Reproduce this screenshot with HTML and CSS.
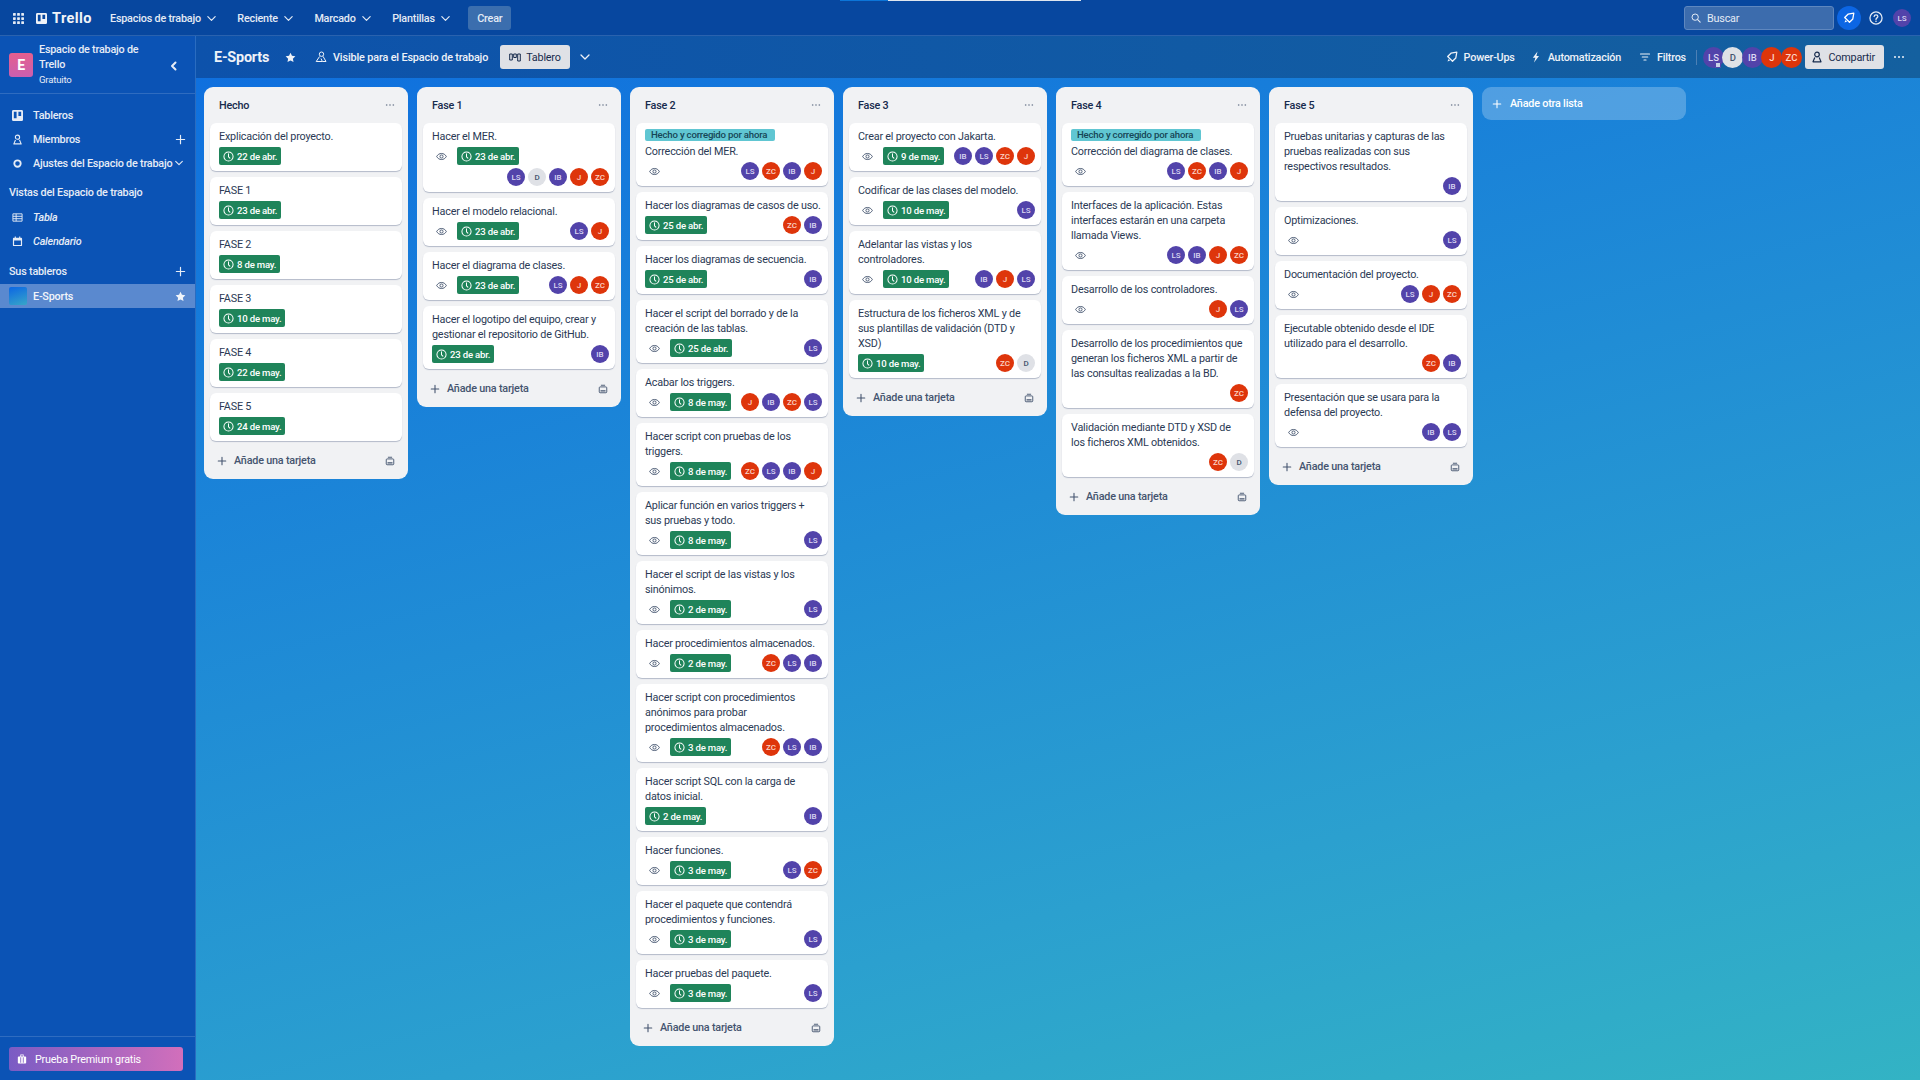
FILE: index.html
```html
<!DOCTYPE html>
<html lang="es">
<head>
    <meta charset="UTF-8">
    <title>E-Sports | Trello</title>
    <link rel="stylesheet" href="styles.css">
</head>
<body>
    <svg class="icon-defs" xmlns="http://www.w3.org/2000/svg">
        <symbol id="i-apps" viewBox="0 0 12 12"><g fill="currentColor"><rect x="0" y="0" width="3" height="3" rx=".6"/><rect x="4.5" y="0" width="3" height="3" rx=".6"/><rect x="9" y="0" width="3" height="3" rx=".6"/><rect x="0" y="4.5" width="3" height="3" rx=".6"/><rect x="4.5" y="4.5" width="3" height="3" rx=".6"/><rect x="9" y="4.5" width="3" height="3" rx=".6"/><rect x="0" y="9" width="3" height="3" rx=".6"/><rect x="4.5" y="9" width="3" height="3" rx=".6"/><rect x="9" y="9" width="3" height="3" rx=".6"/></g></symbol>
        <symbol id="i-board" viewBox="0 0 12 12"><path fill="currentColor" fill-rule="evenodd" d="M1.5 0h9A1.5 1.5 0 0 1 12 1.5v9a1.5 1.5 0 0 1-1.500 1.500h-9A1.500 1.500 0 0 1 0 10.500v-9A1.500 1.500 0 0 1 1.500 0zM2 2v7h3V2zm5 0v4.500h3V2z"/></symbol>
        <symbol id="i-chev" viewBox="0 0 12 12"><path fill="none" stroke="currentColor" stroke-width="1.300" stroke-linecap="round" stroke-linejoin="round" d="M2 4l4 4 4-4"/></symbol>
        <symbol id="i-clock" viewBox="0 0 12 12"><circle cx="6" cy="6" r="5" fill="none" stroke="currentColor" stroke-width="1.100"/><path fill="none" stroke="currentColor" stroke-width="1.100" stroke-linecap="round" d="M6 3v3.300l1.500 1.500"/></symbol>
        <symbol id="i-eye" viewBox="0 0 12 12"><path fill="none" stroke="currentColor" stroke-width="1" d="M.7 6C2 3.800 3.800 2.700 6 2.700S10 3.800 11.300 6C10 8.200 8.200 9.300 6 9.300S2 8.200.7 6z"/><circle cx="6" cy="6" r="1.700" fill="none" stroke="currentColor" stroke-width="1"/></symbol>
        <symbol id="i-plus" viewBox="0 0 12 12"><path fill="none" stroke="currentColor" stroke-width="1.300" stroke-linecap="round" d="M6 1.500v9M1.500 6h9"/></symbol>
        <symbol id="i-dots" viewBox="0 0 12 4"><g fill="currentColor"><circle cx="2" cy="2" r="1"/><circle cx="6" cy="2" r="1"/><circle cx="10" cy="2" r="1"/></g></symbol>
        <symbol id="i-star" viewBox="0 0 12 12"><path fill="currentColor" d="M6 .8l1.600 3.400 3.700.5-2.700 2.600.7 3.700L6 9.200 2.700 11l.7-3.700L.7 4.700l3.700-.5z"/></symbol>
        <symbol id="i-template" viewBox="0 0 12 12"><path fill="none" stroke="currentColor" stroke-width="1.100" d="M3.500 1.500h5M2.500 3.500h7a1 1 0 0 1 1 1v5a1 1 0 0 1-1 1h-7a1 1 0 0 1-1-1v-5a1 1 0 0 1 1-1z"/><path fill="currentColor" d="M3 7.500h6v1.500H3z"/></symbol>
        <symbol id="i-search" viewBox="0 0 12 12"><circle cx="5" cy="5" r="3.800" fill="none" stroke="currentColor" stroke-width="1.200"/><path stroke="currentColor" stroke-width="1.300" stroke-linecap="round" d="M8 8l3 3"/></symbol>
        <symbol id="i-rocket" viewBox="0 0 12 12"><path fill="none" stroke="currentColor" stroke-width="1.300" stroke-linejoin="round" d="M10.800 1.200L9.800 7 6.500 10.300 1.700 5.500 5 2.200z"/><path fill="currentColor" d="M1.500 10.500l1-2.600 1.600 1.600z"/></symbol>
        <symbol id="i-help" viewBox="0 0 12 12"><circle cx="6" cy="6" r="5.200" fill="none" stroke="currentColor" stroke-width="1.100"/><path fill="none" stroke="currentColor" stroke-width="1.100" stroke-linecap="round" d="M4.400 4.700C4.500 3.800 5.200 3.300 6 3.300c.9 0 1.600.6 1.600 1.400 0 1.200-1.600 1.200-1.600 2.500"/><circle cx="6" cy="8.800" r=".7" fill="currentColor"/></symbol>
        <symbol id="i-person" viewBox="0 0 12 12"><circle cx="6" cy="3.500" r="2.300" fill="none" stroke="currentColor" stroke-width="1.200"/><path fill="none" stroke="currentColor" stroke-width="1.200" stroke-linejoin="round" d="M3.800 6.500L2 10.800h8L8.200 6.500"/></symbol>
        <symbol id="i-gear" viewBox="0 0 12 12"><circle cx="6" cy="6" r="3.500" fill="none" stroke="currentColor" stroke-width="2"/></symbol>
        <symbol id="i-table" viewBox="0 0 12 12"><path fill="none" stroke="currentColor" stroke-width="1" d="M1 2h10v8H1zM1 4.700h10M1 7.300h10M4.500 2v8"/></symbol>
        <symbol id="i-calendar" viewBox="0 0 12 12"><path fill="currentColor" fill-rule="evenodd" d="M3 .5h1.200V2h3.600V.5H9V2h1a1 1 0 0 1 1 1v7a1 1 0 0 1-1 1H2a1 1 0 0 1-1-1V3a1 1 0 0 1 1-1h1zM2.300 5v4.700h7.400V5z"/></symbol>
        <symbol id="i-back" viewBox="0 0 12 12"><path fill="none" stroke="currentColor" stroke-width="2" stroke-linecap="round" stroke-linejoin="round" d="M7.500 2.500L4 6l3.500 3.500"/></symbol>
        <symbol id="i-bolt" viewBox="0 0 12 12"><path fill="currentColor" d="M7.500.5L2.800 6.800h2.600L4 11.500l5-6.500H6.400z"/></symbol>
        <symbol id="i-filter" viewBox="0 0 12 12"><path fill="none" stroke="currentColor" stroke-width="1.200" stroke-linecap="round" d="M1.500 3h9M3.300 6h5.400M5 9h2"/></symbol>
        <symbol id="i-gift" viewBox="0 0 12 12"><path fill="currentColor" fill-rule="evenodd" d="M4 .5h4V3h2a1 1 0 0 1 1 1v6.500a1 1 0 0 1-1 1H2a1 1 0 0 1-1-1V4a1 1 0 0 1 1-1h2zM5 1.500V3h2V1.500zM4 4v6.500h1V4zm3 0v6.500h1V4z"/></symbol>
        <symbol id="i-boardview" viewBox="0 0 12 12"><path fill="none" stroke="currentColor" stroke-width="1" d="M.7 3h2.600v6H.7zM4.700 3h2.600v3.500H4.700zM8.700 3h2.600v7H8.700z"/></symbol>
        <symbol id="i-team" viewBox="0 0 12 12"><g fill="none" stroke="currentColor" stroke-width="1"><circle cx="6.500" cy="3.200" r="2.200"/><path d="M4.600 5.500L1.200 10.500h6.200L6 7.500M8 5.300l3 5.200H7.400"/></g></symbol>
    </svg>

    <div class="load-bar"><span class="load-bar-done"></span></div>

    <header class="top-nav">
        <svg class="ico apps-ico"><use href="#i-apps"/></svg>
        <div class="logo"><svg class="ico logo-ico"><use href="#i-board"/></svg><span>Trello</span></div>
        <nav class="top-menu">
            <a class="top-link">Espacios de trabajo <svg class="ico chev"><use href="#i-chev"/></svg></a>
            <a class="top-link">Reciente <svg class="ico chev"><use href="#i-chev"/></svg></a>
            <a class="top-link">Marcado <svg class="ico chev"><use href="#i-chev"/></svg></a>
            <a class="top-link">Plantillas <svg class="ico chev"><use href="#i-chev"/></svg></a>
            <button class="create-btn">Crear</button>
        </nav>
        <div class="top-right">
            <div class="search"><svg class="ico"><use href="#i-search"/></svg><span>Buscar</span></div>
            <span class="rocket"><svg class="ico"><use href="#i-rocket"/></svg></span>
            <svg class="ico help-ico"><use href="#i-help"/></svg>
            <span class="av purple">LS</span>
        </div>
    </header>

    <div class="app-body">
        <aside class="sidebar">
            <div class="ws-head">
                <span class="ws-tile">E</span>
                <div class="ws-info">
                    <div class="ws-name">Espacio de trabajo de Trello</div>
                    <div class="ws-plan">Gratuito</div>
                </div>
                <svg class="ico ws-back"><use href="#i-back"/></svg>
            </div>

            <div class="side-group">
                <a class="side-row"><svg class="ico"><use href="#i-board"/></svg><span>Tableros</span></a>
                <a class="side-row"><svg class="ico"><use href="#i-person"/></svg><span>Miembros</span><svg class="ico side-end"><use href="#i-plus"/></svg></a>
                <a class="side-row"><svg class="ico"><use href="#i-gear"/></svg><span>Ajustes del Espacio de trabajo</span><svg class="ico settings-chev"><use href="#i-chev"/></svg></a>
            </div>

            <h3 class="side-title">Vistas del Espacio de trabajo</h3>
            <a class="side-row"><svg class="ico"><use href="#i-table"/></svg><em>Tabla</em></a>
            <a class="side-row"><svg class="ico"><use href="#i-calendar"/></svg><em>Calendario</em></a>

            <h3 class="side-title boards-title">Sus tableros <svg class="ico side-end"><use href="#i-plus"/></svg></h3>
            <a class="side-row side-active"><span class="board-thumb"></span><span>E-Sports</span><svg class="ico side-end"><use href="#i-star"/></svg></a>

            <div class="side-foot">
                <button class="premium-btn"><svg class="ico"><use href="#i-gift"/></svg>Prueba Premium gratis</button>
            </div>
        </aside>

        <main class="board">
            <div class="board-head">
                <h1 class="board-name">E-Sports</h1>
                <svg class="ico head-star"><use href="#i-star"/></svg>
                <a class="head-link visible-link"><svg class="ico"><use href="#i-team"/></svg>Visible para el Espacio de trabajo</a>
                <button class="light-btn"><svg class="ico"><use href="#i-boardview"/></svg>Tablero</button>
                <svg class="ico head-chev"><use href="#i-chev"/></svg>
                <div class="head-right">
                    <a class="head-link"><svg class="ico"><use href="#i-rocket"/></svg>Power-Ups</a>
                    <a class="head-link auto-link"><svg class="ico"><use href="#i-bolt"/></svg>Automatización</a>
                    <a class="head-link"><svg class="ico"><use href="#i-filter"/></svg>Filtros</a>
                    <span class="head-sep"></span>
                    <div class="head-avatars">
                        <span class="av purple">LS<i class="admin-mark"></i></span><span class="av grey">D</span><span class="av purple">IB</span><span class="av red">J</span><span class="av red">ZC</span>
                    </div>
                    <button class="light-btn share-btn"><svg class="ico"><use href="#i-person"/></svg>Compartir</button>
                    <svg class="ico head-dots"><use href="#i-dots"/></svg>
                </div>
            </div>

            <div class="lists">
                <section class="list">
                    <div class="list-head"><h2>Hecho</h2><svg class="ico dots"><use href="#i-dots"/></svg></div>
                    <article class="card"><p>Explicación del proyecto.</p><div class="meta"><span class="due"><svg class="ico"><use href="#i-clock"/></svg>22 de abr.</span></div></article>
                    <article class="card"><p>FASE 1</p><div class="meta"><span class="due"><svg class="ico"><use href="#i-clock"/></svg>23 de abr.</span></div></article>
                    <article class="card"><p>FASE 2</p><div class="meta"><span class="due"><svg class="ico"><use href="#i-clock"/></svg>8 de may.</span></div></article>
                    <article class="card"><p>FASE 3</p><div class="meta"><span class="due"><svg class="ico"><use href="#i-clock"/></svg>10 de may.</span></div></article>
                    <article class="card"><p>FASE 4</p><div class="meta"><span class="due"><svg class="ico"><use href="#i-clock"/></svg>22 de may.</span></div></article>
                    <article class="card"><p>FASE 5</p><div class="meta"><span class="due"><svg class="ico"><use href="#i-clock"/></svg>24 de may.</span></div></article>
                    <div class="list-foot"><svg class="ico"><use href="#i-plus"/></svg><span>Añade una tarjeta</span><svg class="ico tpl"><use href="#i-template"/></svg></div>
                </section>

                <section class="list">
                    <div class="list-head"><h2>Fase 1</h2><svg class="ico dots"><use href="#i-dots"/></svg></div>
                    <article class="card"><p>Hacer el MER.</p><div class="meta"><svg class="ico eye"><use href="#i-eye"/></svg><span class="due"><svg class="ico"><use href="#i-clock"/></svg>23 de abr.</span><div class="people"><span class="av purple">LS</span><span class="av grey">D</span><span class="av purple">IB</span><span class="av red">J</span><span class="av red">ZC</span></div></div></article>
                    <article class="card"><p>Hacer el modelo relacional.</p><div class="meta"><svg class="ico eye"><use href="#i-eye"/></svg><span class="due"><svg class="ico"><use href="#i-clock"/></svg>23 de abr.</span><div class="people"><span class="av purple">LS</span><span class="av red">J</span></div></div></article>
                    <article class="card"><p>Hacer el diagrama de clases.</p><div class="meta"><svg class="ico eye"><use href="#i-eye"/></svg><span class="due"><svg class="ico"><use href="#i-clock"/></svg>23 de abr.</span><div class="people"><span class="av purple">LS</span><span class="av red">J</span><span class="av red">ZC</span></div></div></article>
                    <article class="card"><p>Hacer el logotipo del equipo, crear y gestionar el repositorio de GitHub.</p><div class="meta"><span class="due"><svg class="ico"><use href="#i-clock"/></svg>23 de abr.</span><div class="people"><span class="av purple">IB</span></div></div></article>
                    <div class="list-foot"><svg class="ico"><use href="#i-plus"/></svg><span>Añade una tarjeta</span><svg class="ico tpl"><use href="#i-template"/></svg></div>
                </section>

                <section class="list">
                    <div class="list-head"><h2>Fase 2</h2><svg class="ico dots"><use href="#i-dots"/></svg></div>
                    <article class="card"><span class="label">Hecho y corregido por ahora</span><p>Corrección del MER.</p><div class="meta"><svg class="ico eye"><use href="#i-eye"/></svg><div class="people"><span class="av purple">LS</span><span class="av red">ZC</span><span class="av purple">IB</span><span class="av red">J</span></div></div></article>
                    <article class="card"><p>Hacer los diagramas de casos de uso.</p><div class="meta"><span class="due"><svg class="ico"><use href="#i-clock"/></svg>25 de abr.</span><div class="people"><span class="av red">ZC</span><span class="av purple">IB</span></div></div></article>
                    <article class="card"><p>Hacer los diagramas de secuencia.</p><div class="meta"><span class="due"><svg class="ico"><use href="#i-clock"/></svg>25 de abr.</span><div class="people"><span class="av purple">IB</span></div></div></article>
                    <article class="card"><p>Hacer el script del borrado y de la creación de las tablas.</p><div class="meta"><svg class="ico eye"><use href="#i-eye"/></svg><span class="due"><svg class="ico"><use href="#i-clock"/></svg>25 de abr.</span><div class="people"><span class="av purple">LS</span></div></div></article>
                    <article class="card"><p>Acabar los triggers.</p><div class="meta"><svg class="ico eye"><use href="#i-eye"/></svg><span class="due"><svg class="ico"><use href="#i-clock"/></svg>8 de may.</span><div class="people"><span class="av red">J</span><span class="av purple">IB</span><span class="av red">ZC</span><span class="av purple">LS</span></div></div></article>
                    <article class="card"><p>Hacer script con pruebas de los triggers.</p><div class="meta"><svg class="ico eye"><use href="#i-eye"/></svg><span class="due"><svg class="ico"><use href="#i-clock"/></svg>8 de may.</span><div class="people"><span class="av red">ZC</span><span class="av purple">LS</span><span class="av purple">IB</span><span class="av red">J</span></div></div></article>
                    <article class="card"><p>Aplicar función en varios triggers + sus pruebas y todo.</p><div class="meta"><svg class="ico eye"><use href="#i-eye"/></svg><span class="due"><svg class="ico"><use href="#i-clock"/></svg>8 de may.</span><div class="people"><span class="av purple">LS</span></div></div></article>
                    <article class="card"><p>Hacer el script de las vistas y los sinónimos.</p><div class="meta"><svg class="ico eye"><use href="#i-eye"/></svg><span class="due"><svg class="ico"><use href="#i-clock"/></svg>2 de may.</span><div class="people"><span class="av purple">LS</span></div></div></article>
                    <article class="card"><p>Hacer procedimientos almacenados.</p><div class="meta"><svg class="ico eye"><use href="#i-eye"/></svg><span class="due"><svg class="ico"><use href="#i-clock"/></svg>2 de may.</span><div class="people"><span class="av red">ZC</span><span class="av purple">LS</span><span class="av purple">IB</span></div></div></article>
                    <article class="card"><p>Hacer script con procedimientos<br>anónimos para probar<br>procedimientos almacenados.</p><div class="meta"><svg class="ico eye"><use href="#i-eye"/></svg><span class="due"><svg class="ico"><use href="#i-clock"/></svg>3 de may.</span><div class="people"><span class="av red">ZC</span><span class="av purple">LS</span><span class="av purple">IB</span></div></div></article>
                    <article class="card"><p>Hacer script SQL con la carga de datos inicial.</p><div class="meta"><span class="due"><svg class="ico"><use href="#i-clock"/></svg>2 de may.</span><div class="people"><span class="av purple">IB</span></div></div></article>
                    <article class="card"><p>Hacer funciones.</p><div class="meta"><svg class="ico eye"><use href="#i-eye"/></svg><span class="due"><svg class="ico"><use href="#i-clock"/></svg>3 de may.</span><div class="people"><span class="av purple">LS</span><span class="av red">ZC</span></div></div></article>
                    <article class="card"><p>Hacer el paquete que contendrá procedimientos y funciones.</p><div class="meta"><svg class="ico eye"><use href="#i-eye"/></svg><span class="due"><svg class="ico"><use href="#i-clock"/></svg>3 de may.</span><div class="people"><span class="av purple">LS</span></div></div></article>
                    <article class="card"><p>Hacer pruebas del paquete.</p><div class="meta"><svg class="ico eye"><use href="#i-eye"/></svg><span class="due"><svg class="ico"><use href="#i-clock"/></svg>3 de may.</span><div class="people"><span class="av purple">LS</span></div></div></article>
                    <div class="list-foot"><svg class="ico"><use href="#i-plus"/></svg><span>Añade una tarjeta</span><svg class="ico tpl"><use href="#i-template"/></svg></div>
                </section>

                <section class="list">
                    <div class="list-head"><h2>Fase 3</h2><svg class="ico dots"><use href="#i-dots"/></svg></div>
                    <article class="card"><p>Crear el proyecto con Jakarta.</p><div class="meta"><svg class="ico eye"><use href="#i-eye"/></svg><span class="due"><svg class="ico"><use href="#i-clock"/></svg>9 de may.</span><div class="people"><span class="av purple">IB</span><span class="av purple">LS</span><span class="av red">ZC</span><span class="av red">J</span></div></div></article>
                    <article class="card"><p>Codificar de las clases del modelo.</p><div class="meta"><svg class="ico eye"><use href="#i-eye"/></svg><span class="due"><svg class="ico"><use href="#i-clock"/></svg>10 de may.</span><div class="people"><span class="av purple">LS</span></div></div></article>
                    <article class="card"><p>Adelantar las vistas y los controladores.</p><div class="meta"><svg class="ico eye"><use href="#i-eye"/></svg><span class="due"><svg class="ico"><use href="#i-clock"/></svg>10 de may.</span><div class="people"><span class="av purple">IB</span><span class="av red">J</span><span class="av purple">LS</span></div></div></article>
                    <article class="card"><p>Estructura de los ficheros XML y de sus plantillas de validación (DTD y XSD)</p><div class="meta"><span class="due"><svg class="ico"><use href="#i-clock"/></svg>10 de may.</span><div class="people"><span class="av red">ZC</span><span class="av grey">D</span></div></div></article>
                    <div class="list-foot"><svg class="ico"><use href="#i-plus"/></svg><span>Añade una tarjeta</span><svg class="ico tpl"><use href="#i-template"/></svg></div>
                </section>

                <section class="list">
                    <div class="list-head"><h2>Fase 4</h2><svg class="ico dots"><use href="#i-dots"/></svg></div>
                    <article class="card"><span class="label">Hecho y corregido por ahora</span><p>Corrección del diagrama de clases.</p><div class="meta"><svg class="ico eye"><use href="#i-eye"/></svg><div class="people"><span class="av purple">LS</span><span class="av red">ZC</span><span class="av purple">IB</span><span class="av red">J</span></div></div></article>
                    <article class="card"><p>Interfaces de la aplicación. Estas interfaces estarán en una carpeta llamada Views.</p><div class="meta"><svg class="ico eye"><use href="#i-eye"/></svg><div class="people"><span class="av purple">LS</span><span class="av purple">IB</span><span class="av red">J</span><span class="av red">ZC</span></div></div></article>
                    <article class="card"><p>Desarrollo de los controladores.</p><div class="meta"><svg class="ico eye"><use href="#i-eye"/></svg><div class="people"><span class="av red">J</span><span class="av purple">LS</span></div></div></article>
                    <article class="card"><p>Desarrollo de los procedimientos que generan los ficheros XML a partir de las consultas realizadas a la BD.</p><div class="meta"><div class="people"><span class="av red">ZC</span></div></div></article>
                    <article class="card"><p>Validación mediante DTD y XSD de<br>los ficheros XML obtenidos.</p><div class="meta"><div class="people"><span class="av red">ZC</span><span class="av grey">D</span></div></div></article>
                    <div class="list-foot"><svg class="ico"><use href="#i-plus"/></svg><span>Añade una tarjeta</span><svg class="ico tpl"><use href="#i-template"/></svg></div>
                </section>

                <section class="list">
                    <div class="list-head"><h2>Fase 5</h2><svg class="ico dots"><use href="#i-dots"/></svg></div>
                    <article class="card"><p>Pruebas unitarias y capturas de las pruebas realizadas con sus respectivos resultados.</p><div class="meta"><div class="people"><span class="av purple">IB</span></div></div></article>
                    <article class="card"><p>Optimizaciones.</p><div class="meta"><svg class="ico eye"><use href="#i-eye"/></svg><div class="people"><span class="av purple">LS</span></div></div></article>
                    <article class="card"><p>Documentación del proyecto.</p><div class="meta"><svg class="ico eye"><use href="#i-eye"/></svg><div class="people"><span class="av purple">LS</span><span class="av red">J</span><span class="av red">ZC</span></div></div></article>
                    <article class="card"><p>Ejecutable obtenido desde el IDE utilizado para el desarrollo.</p><div class="meta"><div class="people"><span class="av red">ZC</span><span class="av purple">IB</span></div></div></article>
                    <article class="card"><p>Presentación que se usara para la defensa del proyecto.</p><div class="meta"><svg class="ico eye"><use href="#i-eye"/></svg><div class="people"><span class="av purple">IB</span><span class="av purple">LS</span></div></div></article>
                    <div class="list-foot"><svg class="ico"><use href="#i-plus"/></svg><span>Añade una tarjeta</span><svg class="ico tpl"><use href="#i-template"/></svg></div>
                </section>

                <div class="add-list"><svg class="ico"><use href="#i-plus"/></svg>Añade otra lista</div>
            </div>
        </main>
    </div>
</body>
</html>
```

FILE: styles.css
```css
* {
    margin: 0;
    padding: 0;
    box-sizing: border-box;
}

body {
    height: 100vh;
    overflow: hidden;
    display: flex;
    flex-direction: column;
    font-family: Roboto, "Noto Sans", sans-serif;
    font-size: 10.8px;
    letter-spacing: -.2px;
    color: #172b4d;
    background: linear-gradient(165deg, #0c6ae0 0%, #2ba0cf 75%, #33b3c4 100%);
}

button {
    font: inherit;
    letter-spacing: inherit;
    border: none;
}

.icon-defs {
    display: none;
}

.ico {
    width: 12px;
    height: 12px;
    flex: none;
}

/* thin strip along the very top of the window */
.load-bar {
    position: absolute;
    top: 0;
    left: 840px;
    width: 241px;
    height: 1px;
    background: #dfe6ef;
}

.load-bar-done {
    display: block;
    width: 48px;
    height: 1px;
    background: #0c75d8;
}

/* Top nav */
.top-nav {
    height: 36px;
    flex: none;
    display: flex;
    align-items: center;
    padding: 1px 0 0 13px;
    background: #07479f;
    border-bottom: 1px solid #2a62ae;
    color: #e4ebf5;
}

.apps-ico {
    width: 11px;
    height: 11px;
}

.logo {
    display: flex;
    align-items: center;
    margin-left: 12px;
    font-size: 14.5px;
    font-weight: 700;
    letter-spacing: .4px;
    width: 62px;
    gap: 5px;
    color: #f0f3f8;
}

.logo-ico {
    width: 11px;
    height: 11px;
}

.top-menu {
    display: flex;
    align-items: center;
    margin-left: 12px;
}

.top-link {
    display: flex;
    align-items: center;
    gap: 5px;
    margin-right: 20.5px;
    font-weight: 500;
    white-space: nowrap;
}

.chev {
    width: 11px;
    height: 11px;
}

.create-btn {
    height: 24px;
    width: 43px;
    border-radius: 3px;
    margin-left: -3px;
    background: #3b6eae;
    color: #e4ebf5;
    font-weight: 500;
}

.top-right {
    margin-left: auto;
    display: flex;
    align-items: center;
    padding-right: 9px;
}

.search {
    width: 150px;
    height: 24px;
    display: flex;
    align-items: center;
    gap: 6px;
    padding-left: 6px;
    border: 1px solid #5e87bf;
    border-radius: 3px;
    background: #3c6cad;
}

.search .ico {
    width: 10px;
    height: 10px;
}

.rocket {
    width: 24px;
    height: 24px;
    margin-left: 3px;
    border-radius: 50%;
    background: #0c66e4;
    color: #fff;
    display: flex;
    align-items: center;
    justify-content: center;
}

.help-ico {
    width: 14px;
    height: 14px;
    margin-left: 8px;
}

.top-right .av {
    margin-left: 10px;
}

/* Avatars */
.av {
    position: relative;
    width: 18px;
    height: 18px;
    flex: none;
    border-radius: 50%;
    display: flex;
    align-items: center;
    justify-content: center;
    font-size: 8px;
    font-weight: 500;
    letter-spacing: 0;
    color: #dcd8f2;
}

.purple {
    background: #5243aa;
}

.red {
    background: #de350b;
    color: #fbd5c9;
}

.grey {
    background: #dfe1e6;
    color: #44546f;
}

.admin-mark {
    position: absolute;
    right: 3px;
    bottom: 0;
    width: 6px;
    height: 6px;
    border-radius: 1px;
    background: #c9d3e6;
    border: 1px solid #5243aa;
}

/* Sidebar + board */
.app-body {
    flex: 1;
    min-height: 0;
    display: flex;
}

.sidebar {
    width: 196px;
    flex: none;
    display: flex;
    flex-direction: column;
    background: #0b53b5;
    border-right: 1px solid #2a6cc0;
    color: #e6ecf6;
}

.ws-head {
    height: 58px;
    flex: none;
    display: flex;
    align-items: center;
    padding: 0 15px 0 9px;
    border-bottom: 1px solid #2f6cc0;
}

.ws-tile {
    width: 24px;
    height: 24px;
    flex: none;
    border-radius: 3px;
    display: flex;
    align-items: center;
    justify-content: center;
    background: linear-gradient(180deg, #e65f8e, #c95fb0);
    color: #fff;
    font-size: 14px;
    font-weight: 700;
}

.ws-info {
    margin-left: 6px;
    padding-top: 1px;
    width: 112px;
    line-height: 15px;
    font-weight: 500;
}

.ws-plan {
    font-size: 9.6px;
    font-weight: 400;
    line-height: 16px;
}

.ws-back {
    margin-left: auto;
    margin-top: 3px;
}

.side-group {
    padding-top: 9px;
}

.side-row {
    height: 24px;
    display: flex;
    align-items: center;
    gap: 10px;
    padding: 0 9px 0 12px;
    font-weight: 500;
    white-space: nowrap;
}

.side-row .ico:first-child {
    width: 11px;
    height: 11px;
}

.side-row em {
    font-weight: 500;
}

.side-end {
    margin-left: auto;
    width: 11px;
    height: 11px;
}

.settings-chev {
    width: 10px;
    height: 10px;
    margin-left: -8px;
}

.side-title {
    display: flex;
    align-items: center;
    height: 24px;
    margin-top: 5px;
    margin-bottom: 1px;
    padding: 0 9px;
    font-size: 10.8px;
    font-weight: 500;
}

.boards-title {
    margin-top: 6px;
    margin-bottom: 1px;
}

.side-active {
    padding-left: 9px;
    gap: 6px;
    background: #5a89cf;
    color: #f2f5fa;
}

.board-thumb {
    width: 18px;
    height: 18px;
    border-radius: 2px;
    background: linear-gradient(160deg, #0c66e4, #37a6c8);
}

.side-foot {
    margin-top: auto;
    height: 44px;
    padding: 10px 9px 0;
    border-top: 1px solid #2f6cc0;
}

.premium-btn {
    width: 174px;
    height: 24px;
    display: flex;
    align-items: center;
    gap: 8px;
    padding-left: 8px;
    border-radius: 3px;
    background: linear-gradient(90deg, #7a5cc4, #d26fbb);
    color: #fff;
}

.premium-btn .ico {
    width: 10px;
    height: 10px;
}

.board {
    flex: 1;
    min-width: 0;
    display: flex;
    flex-direction: column;
}

.board-head {
    height: 42px;
    flex: none;
    display: flex;
    align-items: center;
    padding: 0 15px 0 18px;
    background: linear-gradient(90deg, #0d52ab, #14609f);
    color: #eef2f8;
}

.board-name {
    font-size: 14.4px;
    font-weight: 700;
    width: 71px;
    white-space: nowrap;
}

.head-star {
    width: 11px;
    height: 11px;
}

.head-link {
    display: flex;
    align-items: center;
    gap: 6px;
    font-weight: 500;
    white-space: nowrap;
    margin-right: 15px;
}

.visible-link {
    margin-left: 19px;
    margin-right: 12px;
    letter-spacing: -.13px;
}

.auto-link {
    margin-right: 18px;
}

.light-btn {
    height: 24px;
    display: flex;
    align-items: center;
    gap: 5px;
    padding: 0 9px;
    border-radius: 3px;
    background: #dfe1e6;
    color: #172b4d;
}

.share-btn {
    padding-left: 6px;
}

.head-chev {
    margin-left: 9px;
}

.head-right {
    margin-left: auto;
    display: flex;
    align-items: center;
}

.head-sep {
    width: 1px;
    height: 15px;
    margin-right: 6px;
    margin-left: -5px;
    background: #4d80b5;
}

.head-avatars {
    display: flex;
    margin-right: 5px;
}

.head-avatars .av {
    width: 21px;
    height: 21px;
    font-size: 9.5px;
    margin-right: -1.500px;
}

.head-dots {
    margin-left: 9px;
    height: 4px;
}

/* Lists */
.lists {
    flex: 1;
    min-height: 0;
    display: flex;
    align-items: flex-start;
    gap: 9px;
    padding: 9px 0 0 8px;
}

.list {
    width: 204px;
    flex: none;
    padding: 0 6px 5px;
    border-radius: 9px;
    background: #f1f2f4;
}

.list-head {
    height: 36px;
    display: flex;
    align-items: center;
    justify-content: space-between;
    padding: 0 7px 0 9px;
}

.list-head h2 {
    font-size: 10.8px;
    font-weight: 500;
}

.dots {
    width: 10px;
    height: 4px;
    color: #6b778c;
}

.card {
    padding: 6px 6px 6px 9px;
    margin-bottom: 6px;
    border-radius: 6px;
    background: #fff;
    box-shadow: 0 1px 1px #b3bac9;
}

.card p {
    line-height: 15px;
    color: #2b3a55;
}

.label {
    display: block;
    width: 130px;
    height: 12px;
    margin-bottom: 3px;
    padding-left: 6px;
    border-radius: 2px;
    background: #60c6d2;
    color: #164555;
    font-size: 9.6px;
    font-weight: 500;
    line-height: 12px;
    white-space: nowrap;
}

.meta {
    display: flex;
    flex-wrap: wrap;
    align-items: center;
    gap: 3px 0;
    margin-top: 3px;
}

.eye {
    width: 11px;
    height: 11px;
    margin: 0 10px 0 4px;
    color: #44546f;
}

.due {
    height: 18px;
    display: inline-flex;
    align-items: center;
    gap: 3px;
    padding: 0 4px;
    border-radius: 2px;
    background: #1f845a;
    color: #fff;
    font-size: 9.6px;
    font-weight: 500;
    white-space: nowrap;
}

.due .ico {
    width: 11px;
    height: 11px;
}

.people {
    display: flex;
    gap: 3px;
    margin-left: auto;
    min-height: 18px;
}

.list-foot {
    height: 27px;
    display: flex;
    align-items: center;
    gap: 7px;
    padding: 0 7px;
    color: #44546f;
    font-weight: 500;
}

.list-foot .ico {
    width: 10px;
    height: 10px;
}

.tpl {
    margin-left: auto;
}

.add-list {
    width: 204px;
    height: 33px;
    flex: none;
    display: flex;
    align-items: center;
    gap: 8px;
    padding-left: 10px;
    border-radius: 9px;
    background: rgba(255, 255, 255, .24);
    color: #fff;
    font-weight: 500;
}

.add-list .ico {
    width: 10px;
    height: 10px;
}
```
